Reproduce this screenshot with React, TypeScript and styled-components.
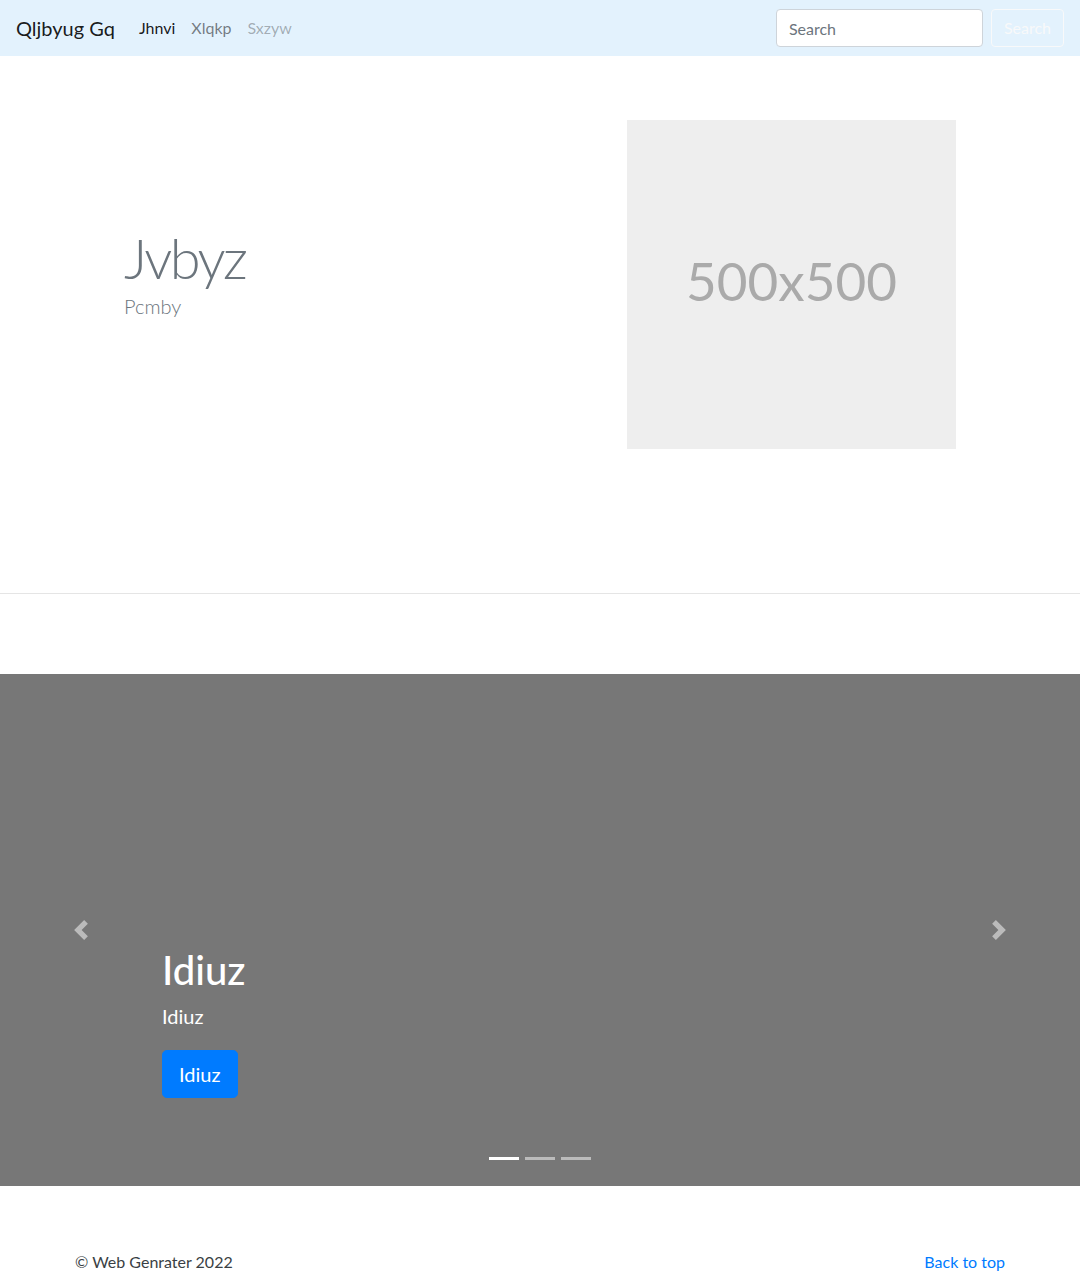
import React from "react";
import styled, { createGlobalStyle } from "styled-components";

const GlobalStyle = createGlobalStyle`
	* {
		box-sizing: border-box;
	}
	body {
		margin: 0;
		font-family: Lato, "Open Sans", Arial, sans-serif;
		font-size: 16px;
		line-height: 1.5;
		color: #212529;
		background: #fff;
	}
`;

const Navbar = styled.nav`
	display: flex;
	align-items: center;
	justify-content: space-between;
	padding: 8px 16px;
	background: #e3f2fd;
`;

const NavLeft = styled.div`
	display: flex;
	align-items: center;
`;

const Brand = styled.a`
	font-size: 20px;
	line-height: 1.5;
	padding: 5px 0;
	margin-right: 16px;
	color: rgba(0, 0, 0, 0.9);
	text-decoration: none;
`;

const NavList = styled.ul`
	display: flex;
	list-style: none;
	margin: 0;
	padding: 0;
`;

const navColors = {
	active: "rgba(0, 0, 0, 0.9)",
	normal: "rgba(0, 0, 0, 0.5)",
	disabled: "rgba(0, 0, 0, 0.3)",
};

const NavLink = styled.a<{ $state: keyof typeof navColors }>`
	display: block;
	padding: 8px;
	color: ${(p) => navColors[p.$state]};
	text-decoration: none;
`;

const SearchForm = styled.form`
	display: flex;
	align-items: center;
	gap: 8px;
`;

const SearchInput = styled.input`
	width: 207px;
	height: 38px;
	padding: 6px 12px;
	font-family: inherit;
	font-size: 16px;
	color: #495057;
	background: #fff;
	border: 1px solid #ced4da;
	border-radius: 4px;
	&::placeholder {
		color: #6c757d;
	}
`;

const OutlineButton = styled.button`
	height: 38px;
	padding: 6px 12px;
	font-family: inherit;
	font-size: 16px;
	line-height: 1.5;
	color: #f8f9fa;
	background: transparent;
	border: 1px solid #f8f9fa;
	border-radius: 4px;
`;

const Hero = styled.section`
	border-bottom: 1px solid #e5e5e5;
`;

const HeroInner = styled.div`
	width: 960px;
	margin: 0 auto;
	display: flex;
	align-items: center;
	padding: 64px 64px 144px;
`;

const HeroText = styled.div`
	flex: 1;
`;

const Display = styled.h1`
	margin: 0;
	font-size: 56px;
	font-weight: 300;
	line-height: 1.1;
	letter-spacing: -0.045em;
	color: #6c757d;
`;

const Lead = styled.p`
	margin: 3px 0 21px;
	font-size: 20px;
	font-weight: 300;
	color: #6c757d;
`;

const Placeholder = styled.div`
	width: 329px;
	height: 329px;
	display: flex;
	align-items: center;
	justify-content: center;
	padding-bottom: 8px;
	background: #eee;
	color: #aaa;
	font-size: 53px;
`;

const Carousel = styled.div`
	position: relative;
	height: 512px;
	margin: 80px 0 64px;
	background: #777;
	overflow: hidden;
`;

const Slide = styled.div`
	height: 100%;
	display: flex;
	align-items: flex-end;
	padding: 0 15% 48px;
`;

const Caption = styled.div`
	width: 100%;
	padding: 20px 0;
	color: #fff;
`;

const CaptionTitle = styled.h1`
	margin: 0 0 8px;
	font-size: 40px;
	font-weight: 500;
	line-height: 1.2;
`;

const CaptionText = styled.p`
	margin: 0 0 20px;
	font-size: 20px;
	line-height: 1.4;
`;

const PrimaryButton = styled.a`
	display: inline-block;
	padding: 8px 16px;
	font-size: 20px;
	line-height: 1.5;
	color: #fff;
	background: #007bff;
	border: 1px solid #007bff;
	border-radius: 4.8px;
	text-decoration: none;
`;

const Control = styled.a<{ $side: "left" | "right" }>`
	position: absolute;
	top: 0;
	bottom: 0;
	${(p) => p.$side}: 0;
	width: 15%;
	display: flex;
	align-items: center;
	justify-content: center;
	opacity: 0.5;
`;

const Indicators = styled.ol`
	position: absolute;
	left: 0;
	right: 0;
	bottom: 0;
	display: flex;
	justify-content: center;
	list-style: none;
	margin: 0 0 16px;
	padding: 0;
`;

const Indicator = styled.li<{ $active?: boolean }>`
	width: 30px;
	height: 3px;
	margin: 0 3px;
	box-sizing: content-box;
	border-top: 10px solid transparent;
	border-bottom: 10px solid transparent;
	background: #fff;
	background-clip: padding-box;
	opacity: ${(p) => (p.$active ? 1 : 0.5)};
`;

const Footer = styled.footer`
	width: 930px;
	margin: 0 auto;
	display: flex;
	justify-content: space-between;
`;

const FooterText = styled.p`
	margin: 0 0 16px;
	color: #3a3f44;
`;

const FooterLink = styled.a`
	color: #007bff;
	text-decoration: none;
`;

const Chevron: React.FC<{ dir: "prev" | "next" }> = ({ dir }) => (
	<svg width="20" height="20" viewBox="0 0 8 8" fill="#fff">
		{dir === "prev" ? (
			<path d="M5.25 0l-4 4 4 4 1.5-1.5L4.25 4l2.5-2.5L5.25 0z" />
		) : (
			<path d="M2.75 0l-1.5 1.5L3.75 4l-2.5 2.5L2.75 8l4-4-4-4z" />
		)}
	</svg>
);

export default function App() {
	return (
		<>
			<GlobalStyle />
			<Navbar>
				<NavLeft>
					<Brand href="#">Qljbyug Gq</Brand>
					<NavList>
						<li><NavLink $state="active" href="#">Jhnvi</NavLink></li>
						<li><NavLink $state="normal" href="#">Xlqkp</NavLink></li>
						<li><NavLink $state="disabled" href="#">Sxzyw</NavLink></li>
					</NavList>
				</NavLeft>
				<SearchForm onSubmit={(e) => e.preventDefault()}>
					<SearchInput type="search" placeholder="Search" />
					<OutlineButton type="submit">Search</OutlineButton>
				</SearchForm>
			</Navbar>

			<Hero>
				<HeroInner>
					<HeroText>
						<Display>Jvbyz</Display>
						<Lead>Pcmby</Lead>
					</HeroText>
					<Placeholder>500x500</Placeholder>
				</HeroInner>
			</Hero>

			<Carousel>
				<Slide>
					<Caption>
						<CaptionTitle>Idiuz</CaptionTitle>
						<CaptionText>Idiuz</CaptionText>
						<CaptionText>
							<PrimaryButton href="#">Idiuz</PrimaryButton>
						</CaptionText>
					</Caption>
				</Slide>
				<Control $side="left" href="#"><Chevron dir="prev" /></Control>
				<Control $side="right" href="#"><Chevron dir="next" /></Control>
				<Indicators>
					<Indicator $active />
					<Indicator />
					<Indicator />
				</Indicators>
			</Carousel>

			<Footer>
				<FooterText>© Web Genrater 2022</FooterText>
				<FooterText><FooterLink href="#">Back to top</FooterLink></FooterText>
			</Footer>
		</>
	);
}
